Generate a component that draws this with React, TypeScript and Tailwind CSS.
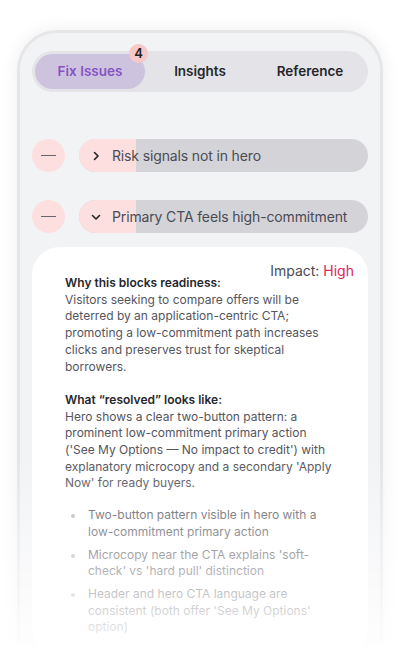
import React from "react";

const font = { fontFamily: "Inter, 'Noto Sans', sans-serif" };

function Minus() {
  return (
    <div className="flex h-[33px] w-[33px] shrink-0 items-center justify-center rounded-full bg-[#fddfdf]">
      <div className="h-[1.5px] w-[15px] bg-[#66666d]" />
    </div>
  );
}

function IssueRow({ title, open }: { title: string; open?: boolean }) {
  return (
    <div className="flex items-center gap-[14px]">
      <Minus />
      <div className="relative flex h-[33px] flex-1 items-center overflow-hidden rounded-full bg-[#d4d4d8]">
        <div className="absolute inset-y-0 left-0 w-[57px] bg-[#fddfdf]" />
        <div className="relative flex items-center gap-[10px] pl-[11px] text-[14px] tracking-[-0.01em] text-[#4b4b55]">
          <svg width="12" height="12" viewBox="0 0 12 12" fill="none" stroke="#222" strokeWidth="1.6" strokeLinecap="round" strokeLinejoin="round">
            {open ? <path d="M2.5 4.5 6 8l3.5-3.5" /> : <path d="M4.5 2.5 8 6l-3.5 3.5" />}
          </svg>
          <span>{title}</span>
        </div>
      </div>
    </div>
  );
}

export default function App() {
  return (
    <div className="relative h-[654px] w-[411px] overflow-hidden bg-white" style={font}>
      <div className="pl-[17px] pt-[30px]">
        <div className="h-[613px] w-[366px] rounded-t-[40px] border-[3px] border-b-0 border-[#e6e6e9] bg-[#f2f3f5] px-[12px] pt-[18px] shadow-[0_0_18px_rgba(0,0,0,0.07)]">
          {/* tabs */}
          <div className="grid h-[41px] grid-cols-3 rounded-full bg-[#e4e4e8] p-[3px] text-[13.5px] font-semibold">
            <div className="relative flex items-center justify-center rounded-full bg-[#cec3de] text-[#8653c4]">
              Fix Issues
              <span className="absolute left-[94px] top-[-10px] flex h-[19px] w-[19px] items-center justify-center rounded-full bg-[#f6c8c8] text-[13px] font-semibold text-[#222]">
                4
              </span>
            </div>
            <div className="flex items-center justify-center text-[#26262b]">Insights</div>
            <div className="flex items-center justify-center text-[#26262b]">Reference</div>
          </div>

          {/* issues */}
          <div className="mt-[47px] flex flex-col gap-[28px]">
            <IssueRow title="Risk signals not in hero" />
            <IssueRow title="Primary CTA feels high-commitment" open />
          </div>

          {/* detail card */}
          <div className="mt-[14px] rounded-[28px] bg-white px-[33px] pb-[20px] pt-[14px] text-[12px] leading-[16.7px] text-[#55555e]">
            <div className="-mr-[19px] text-right text-[14px] leading-[20px] text-[#4b4b55]">
              Impact: <span className="text-[#e0245e]">High</span>
            </div>
            <div className="-mt-[6px]">
              <p className="font-semibold text-[#27272e]">Why this blocks readiness:</p>
              <p>
                Visitors seeking to compare offers will be deterred by an application-centric CTA; promoting a
                low-commitment path increases clicks and preserves trust for skeptical borrowers.
              </p>
              <p className="mt-[16.7px] font-semibold text-[#27272e]">What “resolved” looks like:</p>
              <p>
                Hero shows a clear two-button pattern: a prominent low-commitment primary action ('See My Options —
                No impact to credit') with explanatory microcopy and a secondary 'Apply Now' for ready buyers.
              </p>
              <ul className="mt-[15px] flex flex-col gap-[6px]">
                {[
                  "Two-button pattern visible in hero with a low-commitment primary action",
                  "Microcopy near the CTA explains 'soft-check' vs 'hard pull' distinction",
                  "Header and hero CTA language are consistent (both offer 'See My Options' option)",
                ].map((t) => (
                  <li key={t} className="flex gap-[13px] pl-[6px]">
                    <span className="mt-[7px] h-[4px] w-[4px] shrink-0 rounded-full bg-[#b5b5bb]" />
                    <span>{t}</span>
                  </li>
                ))}
              </ul>
            </div>
          </div>
        </div>
      </div>
      {/* fade */}
      <div className="pointer-events-none absolute inset-x-0 bottom-0 h-[194px] bg-gradient-to-b from-white/0 to-white/95" />
    </div>
  );
}
